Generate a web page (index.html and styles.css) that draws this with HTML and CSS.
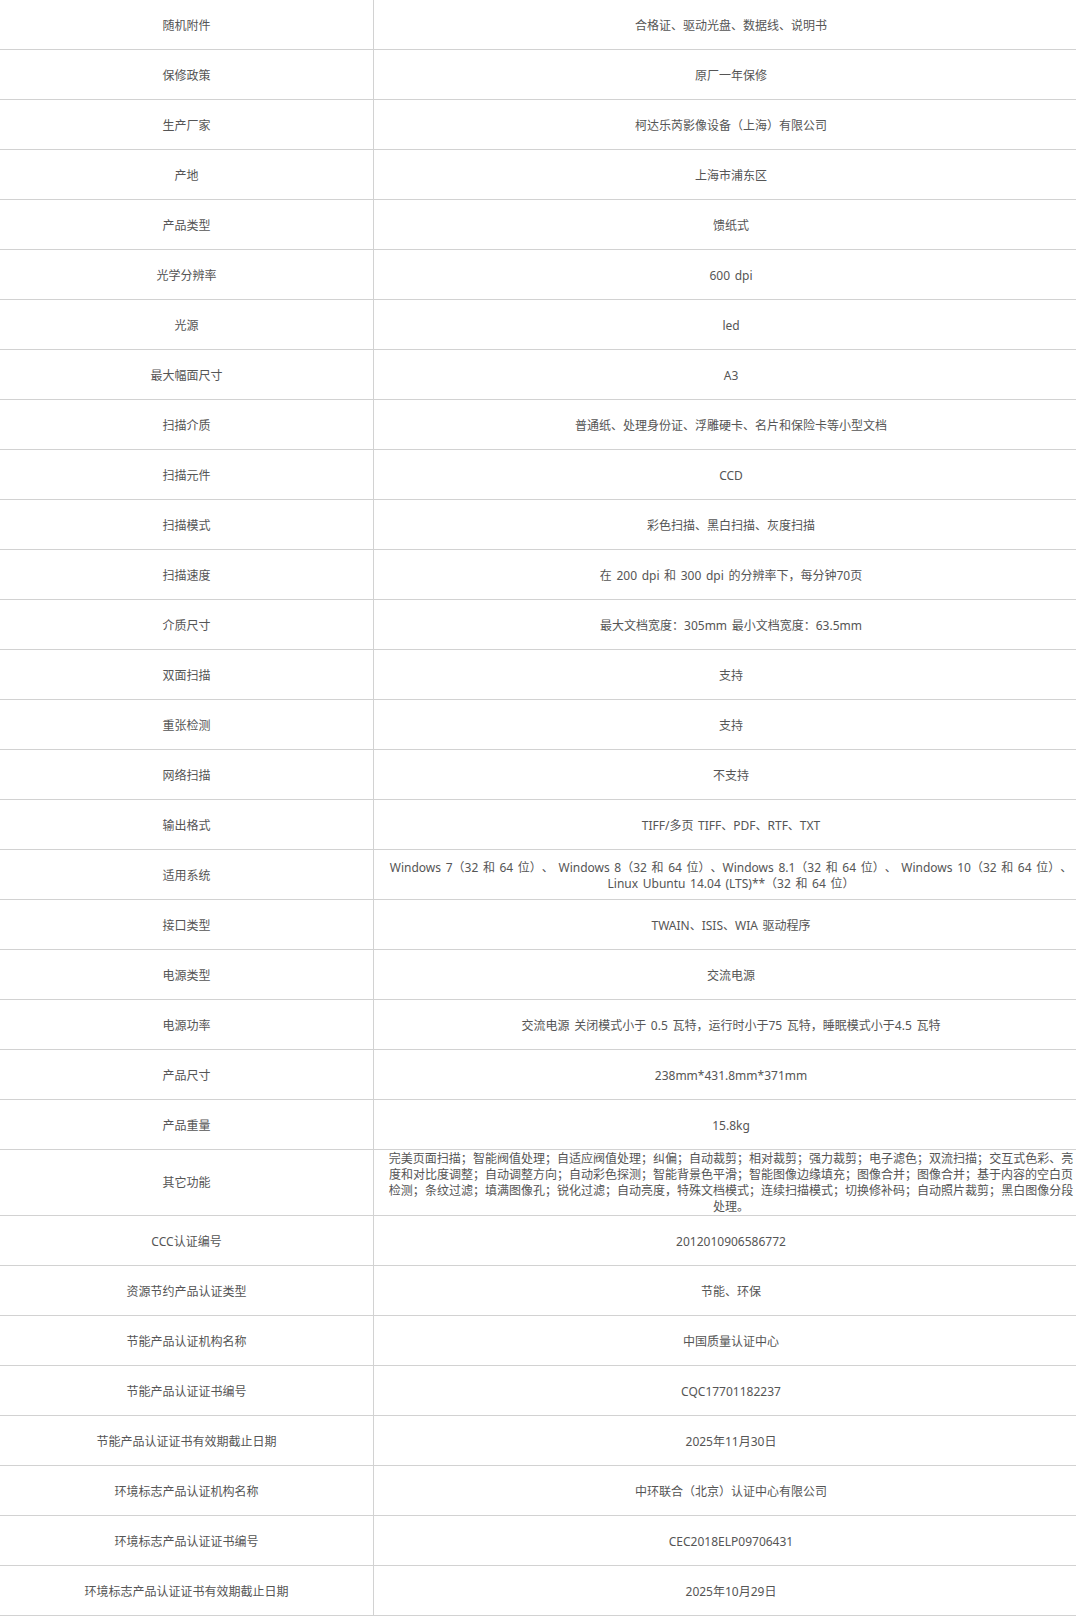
FILE: index.html
```html
<!DOCTYPE html>
<html lang="zh-CN">
<head>
<meta charset="utf-8">
<title>参数</title>
<link rel="stylesheet" href="styles.css">
</head>
<body>
<table class="spec">
<tbody>
<tr class="first"><td class="k">随机附件</td><td class="v">合格证、驱动光盘、数据线、说明书</td></tr>
<tr><td class="k">保修政策</td><td class="v">原厂一年保修</td></tr>
<tr><td class="k">生产厂家</td><td class="v">柯达乐芮影像设备（上海）有限公司</td></tr>
<tr><td class="k">产地</td><td class="v">上海市浦东区</td></tr>
<tr><td class="k">产品类型</td><td class="v">馈纸式</td></tr>
<tr><td class="k">光学分辨率</td><td class="v">600 dpi</td></tr>
<tr><td class="k">光源</td><td class="v">led</td></tr>
<tr><td class="k">最大幅面尺寸</td><td class="v">A3</td></tr>
<tr><td class="k">扫描介质</td><td class="v">普通纸、处理身份证、浮雕硬卡、名片和保险卡等小型文档</td></tr>
<tr><td class="k">扫描元件</td><td class="v">CCD</td></tr>
<tr><td class="k">扫描模式</td><td class="v">彩色扫描、黑白扫描、灰度扫描</td></tr>
<tr><td class="k">扫描速度</td><td class="v">在 200 dpi 和 300 dpi 的分辨率下<span class="pc">，</span>每分钟70页</td></tr>
<tr><td class="k">介质尺寸</td><td class="v">最大文档宽度<span class="pc">：</span>305mm 最小文档宽度<span class="pc">：</span>63.5mm</td></tr>
<tr><td class="k">双面扫描</td><td class="v">支持</td></tr>
<tr><td class="k">重张检测</td><td class="v">支持</td></tr>
<tr><td class="k">网络扫描</td><td class="v">不支持</td></tr>
<tr><td class="k">输出格式</td><td class="v">TIFF/多页 TIFF、PDF、RTF、TXT</td></tr>
<tr><td class="k">适用系统</td><td class="v">Windows 7（32 和 64 位）、 Windows 8（32 和 64 位）、Windows 8.1（32 和 64 位）、 Windows 10（32 和 64 位）、Linux Ubuntu 14.04 (LTS)**（32 和 64 位）</td></tr>
<tr><td class="k">接口类型</td><td class="v">TWAIN、ISIS、WIA 驱动程序</td></tr>
<tr><td class="k">电源类型</td><td class="v">交流电源</td></tr>
<tr><td class="k">电源功率</td><td class="v">交流电源 关闭模式小于 0.5 瓦特<span class="pc">，</span>运行时小于75 瓦特<span class="pc">，</span>睡眠模式小于4.5 瓦特</td></tr>
<tr><td class="k">产品尺寸</td><td class="v">238mm*431.8mm*371mm</td></tr>
<tr><td class="k">产品重量</td><td class="v">15.8kg</td></tr>
<tr class="tall"><td class="k">其它功能</td><td class="v">完美页面扫描<span class="pc">；</span>智能阀值处理<span class="pc">；</span>自适应阀值处理<span class="pc">；</span>纠偏<span class="pc">；</span>自动裁剪<span class="pc">；</span>相对裁剪<span class="pc">；</span>强力裁剪<span class="pc">；</span>电子滤色<span class="pc">；</span>双流扫描<span class="pc">；</span>交互式色彩、亮度和对比度调整<span class="pc">；</span>自动调整方向<span class="pc">；</span>自动彩色探测<span class="pc">；</span>智能背景色平滑<span class="pc">；</span>智能图像边缘填充<span class="pc">；</span>图像合并<span class="pc">；</span>图像合并<span class="pc">；</span>基于内容的空白页检测<span class="pc">；</span>条纹过滤<span class="pc">；</span>填满图像孔<span class="pc">；</span>锐化过滤<span class="pc">；</span>自动亮度<span class="pc">，</span>特殊文档模式<span class="pc">；</span>连续扫描模式<span class="pc">；</span>切换修补码<span class="pc">；</span>自动照片裁剪<span class="pc">；</span>黑白图像分段处理。</td></tr>
<tr><td class="k">CCC认证编号</td><td class="v">2012010906586772</td></tr>
<tr><td class="k">资源节约产品认证类型</td><td class="v">节能、环保</td></tr>
<tr><td class="k">节能产品认证机构名称</td><td class="v">中国质量认证中心</td></tr>
<tr><td class="k">节能产品认证证书编号</td><td class="v">CQC17701182237</td></tr>
<tr><td class="k">节能产品认证证书有效期截止日期</td><td class="v">2025年11月30日</td></tr>
<tr><td class="k">环境标志产品认证机构名称</td><td class="v">中环联合（北京）认证中心有限公司</td></tr>
<tr><td class="k">环境标志产品认证证书编号</td><td class="v">CEC2018ELP09706431</td></tr>
<tr><td class="k">环境标志产品认证证书有效期截止日期</td><td class="v">2025年10月29日</td></tr>
</tbody>
</table>
<div class="next"><div class="next-cell"></div></div>
</body>
</html>
```

FILE: styles.css
```css
html, body {
  margin: 0;
  padding: 0;
  background: #fff;
}
body {
  font-family: "Noto Sans", "Noto Sans CJK SC", sans-serif;
  font-size: 12px;
  color: #555;
  width: 1076px;
  overflow: hidden;
  text-spacing-trim: space-all;
  word-spacing: 1.5px;
}
.spec {
  width: 1076px;
  border-collapse: collapse;
  table-layout: fixed;
}
.spec tr {
  height: 50px;
}
.spec tr.first {
  height: 49px;
}
.spec tr.tall {
  height: 65px;
}
.spec td {
  border-bottom: 1px solid #d2d2d2;
  text-align: center;
  vertical-align: middle;
  line-height: 16px;
  padding: 4px 2px 0 14px;
}
.spec td.k {
  width: 353px;
  border-right: 1px solid #d2d2d2;
  padding: 4px 10px 0 10px;
}
.spec tr.tall td {
  padding-top: 1px;
}
.pc {
  font-family: "Noto Sans CJK TC", "Noto Sans CJK SC", sans-serif;
  line-height: 0;
}
.next {
  height: 2px;
  background: #f2f2f2;
  border-top: 1px solid #cfcfcf;
}
.next-cell {
  width: 268px;
  height: 2px;
  border-right: 1px solid #cfcfcf;
}
```
